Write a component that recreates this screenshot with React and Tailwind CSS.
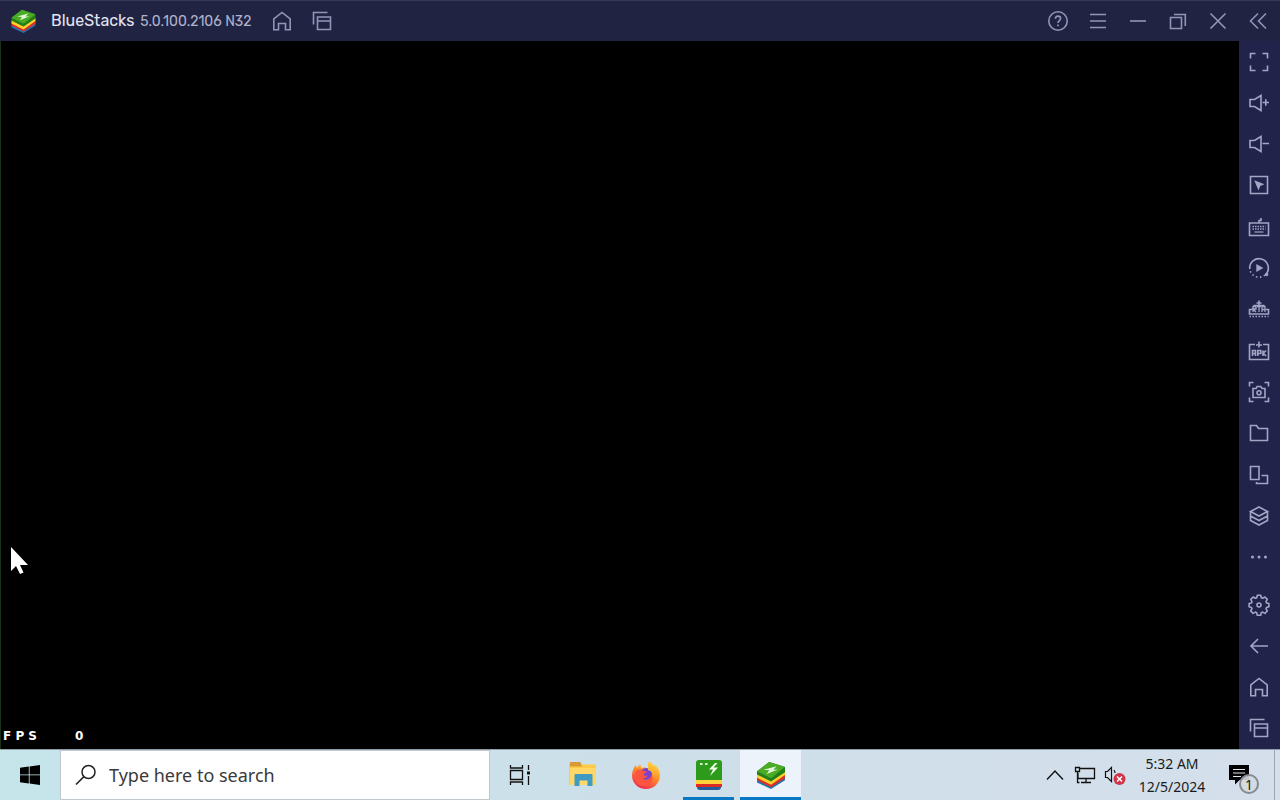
import React from "react";

function Icon({ children, size = 24, className = "" }) {
  return (
    <svg
      width={size}
      height={size}
      viewBox="0 0 24 24"
      fill="none"
      stroke="currentColor"
      strokeWidth="1.6"
      className={`shrink-0 ${className}`}
      aria-hidden="true"
    >
      {children}
    </svg>
  );
}

const HomeIcon = () => (
  <Icon>
    <path d="M3.8 20.800V9.800L12 3.400l8.200 6.400v11h-4.700V14.500h-7v6.300z" />
  </Icon>
);
const WindowsIcon = () => (
  <Icon>
    <path d="M3.500 15.500v-12h14M7.500 8h13v12.500h-13zM7.500 12h13" />
  </Icon>
);
const HelpIcon = () => (
  <Icon>
    <circle cx="12" cy="12" r="9.2" />
    <path d="M9.400 9.800c0-1.700 1.100-2.700 2.600-2.700s2.600 1 2.600 2.400c0 2-2.600 2.100-2.600 4.400M12 15.600v1.600" />
  </Icon>
);
const MenuIcon = () => (
  <Icon>
    <path d="M4 5.500h16M4 12h16M4 18.500h16" />
  </Icon>
);
const MinimizeIcon = () => (
  <Icon>
    <path d="M4 12h16" />
  </Icon>
);
const RestoreIcon = () => (
  <Icon>
    <path d="M4.500 8.500h11v11h-11zM8 5.500h11.300V17" />
  </Icon>
);
const CloseIcon = () => (
  <Icon>
    <path d="M4.500 4.500l15 15M19.500 4.500l-15 15" />
  </Icon>
);
const CollapseIcon = () => (
  <Icon>
    <path d="M12 4.500L4.500 12l7.500 7.500M20 4.500L12.500 12l7.500 7.500" />
  </Icon>
);
const FullscreenIcon = () => (
  <Icon>
    <path d="M3.500 8.500v-5h5M15.500 3.500h5v5M20.500 15.500v5h-5M8.500 20.500h-5v-5" />
  </Icon>
);
const VolumeUpIcon = () => (
  <Icon>
    <path d="M3 8.500h4.500l6.500-4v15l-6.500-4H3zM15.500 11.500H22M18.800 8.300v6.400" />
  </Icon>
);
const VolumeDownIcon = () => (
  <Icon>
    <path d="M3 8.500h4.500l6.500-4v15l-6.500-4H3zM15.500 11.500H22" />
  </Icon>
);
const CursorLockIcon = () => (
  <Icon>
    <path d="M3.500 3.500h17v17h-17z" />
    <path d="M7.200 7.200l10.300 4-4.200 1.700-1.800 4.600z" fill="currentColor" stroke="none" />
  </Icon>
);
const KeyboardIcon = () => (
  <Icon>
    <path d="M2.500 8h19v12.500h-19zM12 8V5.500h2V3" />
    <path d="M5.500 11.500h13M5.500 14h13" strokeDasharray="1.500 1" />
    <path d="M7.500 17h9" strokeWidth="1.200" />
  </Icon>
);
const SyncIcon = () => (
  <Icon>
    <path d="M2.800 13A9.300 9.300 0 1 1 19.500 17.500" />
    <path d="M3.300 15.200A9.300 9.300 0 0 0 18 19" strokeDasharray="1.500 2.500" />
    <path d="M9.300 8l7 4-7 4z" fill="currentColor" stroke="none" />
    <circle cx="19.600" cy="18.500" r="1.800" fill="currentColor" stroke="none" />
  </Icon>
);
const RealTimeIcon = () => (
  <Icon>
    <path d="M5.500 12.500h-3v4.500h19v-4.500h-3M12 8V3.500M9.500 6h5M6.500 8.500h11" />
    <path d="M6 15V9.500h3v2.500H6l3 3M10 9.500h4M12 9.500V15M15 15V9.500h3V15M15 12.500h3" strokeWidth="1.300" />
    <path d="M2.500 19.500h19" strokeDasharray="1.500 1.500" />
  </Icon>
);
const ApkIcon = () => (
  <Icon>
    <path d="M8 5.500H2.500v15h19v-15H16M12 2.500v6M9 6h6" />
    <path d="M5.500 17v-5.500h3V17M5.500 14.500h3M10.800 17v-5.500h3v3h-3M16 11.500V17M19 11.500l-2.800 2.700L19 17" />
  </Icon>
);
const ScreenshotIcon = () => (
  <Icon>
    <path d="M2.500 6.500v-4h4M17.500 2.500h4v4M21.500 17.500v4h-4M6.500 21.500h-4v-4" />
    <path d="M6 8.500h3l1.200-2h3.600l1.200 2h3v9H6z" />
    <circle cx="12" cy="12.700" r="2" />
  </Icon>
);
const FolderIcon = () => (
  <Icon>
    <path d="M3.500 19.500v-15h6l2 3h9v12z" />
  </Icon>
);
const RotateIcon = () => (
  <Icon>
    <path d="M3.500 3.500h8.500v13H3.500z" />
    <path d="M14.500 12.500h6v8h-11V19" />
  </Icon>
);
const LayersIcon = () => (
  <Icon>
    <path d="M12 3l8.500 4.500L12 12 3.500 7.500zM3.500 7.500v9L12 21l8.500-4.500v-9M3.500 12l8.500 4.500 8.500-4.500" />
  </Icon>
);
const MoreIcon = () => (
  <Icon>
    <g fill="currentColor" stroke="none">
      <circle cx="5.500" cy="12" r="1.500" />
      <circle cx="12" cy="12" r="1.500" />
      <circle cx="18.500" cy="12" r="1.500" />
    </g>
  </Icon>
);
const GearIcon = () => (
  <Icon>
    <path
      strokeLinejoin="round"
      d="M10.300 2.200h3.400l.6 2.500 1.300.6 2.300-1.300 2.400 2.400-1.300 2.300.5 1.200 2.400.7v3.200l-2.400.7-.5 1.200 1.300 2.300-2.400 2.400-2.300-1.300-1.300.6-.6 2.500h-3.400l-.6-2.500-1.300-.6-2.300 1.300-2.400-2.400L5 15.700l-.5-1.200-2.400-.7v-3.200l2.400-.7L5 8.700 3.700 6.400l2.400-2.400 2.300 1.300 1.300-.6z"
    />
    <circle cx="12" cy="12" r="2" />
  </Icon>
);
const BackIcon = () => (
  <Icon>
    <path d="M21 12H4M11 5l-7 7 7 7" />
  </Icon>
);

function StackLogo({ className }) {
  return (
    <svg viewBox="0 0 32 30" className={className} aria-hidden="true">
      <path d="M1 20l15 6 15-9v3.500L16 30 1 23z" fill="#2472b2" />
      <path d="M1 17l15 7.500L31 14v4.500L16 28 1 20.500z" fill="#dc2f25" />
      <path d="M1 14l15 7.500L31 11v4L16 25.500 1 18z" fill="#ffd02c" />
      <path d="M1 11L14 1l17 5.500V12L16 22 1 14.500z" fill="#238017" />
      <path d="M1 11L14 1l17 5.500L16 18.500z" fill="#4aab25" />
      <path d="M8 9.500l14-4-3.500 4 5-.5-12 5 2.500-4z" fill="#e2f6d8" />
    </svg>
  );
}

function FolderLogo() {
  return (
    <svg viewBox="0 0 28 26" className="h-[26px] w-7" aria-hidden="true">
      <path d="M0 1.500h11l2 1h13q1 0 1 1V23H1q-1 0-1-1z" fill="#ffca46" />
      <path d="M1 0h10.500L13 4.500H1z" fill="#d99a35" />
      <path d="M1 6h26v17H1z" fill="#ffd766" />
      <path d="M5.500 24V13q0-1 1-1h16q1 0 1 1v11h-5v-5.500h-8V24z" fill="#409bc3" />
    </svg>
  );
}

function FirefoxLogo() {
  return (
    <svg viewBox="0 0 30 30" className="h-[30px] w-[30px]" aria-hidden="true">
      <defs>
        <linearGradient id="fox" x1="0.8" y1="0" x2="0.3" y2="1">
          <stop offset="0" stopColor="#ffe345" />
          <stop offset="0.45" stopColor="#ff9427" />
          <stop offset="1" stopColor="#ef2653" />
        </linearGradient>
      </defs>
      <path
        d="M18 1c3 2 4 4 4.500 5.500 1-.5 1-1.500 1-2 4 3 5.500 7 5.500 11C29 23 23 29 15 29S1 23 1 15.500C1 11 3 7 5 5l.8 3C7 6.500 8 5 9.500 4.500L10 8c3-1 6 0 8 1-2-3-1-6 0-8z"
        fill="url(#fox)"
      />
      <circle cx="15" cy="14" r="6" fill="#7941cf" />
      <path
        d="M6 10c3-1 5-.5 7 1l3 .5c-1 1.800-3 1.500-3.500 3 .5 1.500 2.500 1.500 4 .8-.7 3-3 3.500-5.500 3 3 3 9 1.500 10-4 2 7-2 12-8 12-6 0-9.500-4.500-9.500-10 0-2.500.7-4.500 2.500-6.300z"
        fill="#fb553f"
      />
      <path d="M17 8c5 0 7.500 4 6 9-1-4-2.500-6-6-7z" fill="#ffb42c" />
    </svg>
  );
}

function ManagerLogo() {
  return (
    <svg viewBox="0 0 26 30" className="h-[30px] w-[26px]" aria-hidden="true">
      <path d="M1 24h24v3q0 3-3 3H4q-3 0-3-3z" fill="#245c9b" />
      <path d="M0 22h26v5H0z" fill="#db2b25" />
      <path d="M0 19h26v5H0z" fill="#ffd13a" />
      <path d="M0 3q0-3 3-3h20q3 0 3 3v17H0z" fill="#2c9b1b" />
      <path d="M19 3l-6 6.500h4L14 16l8-8.500h-4.500L21.500 3z" fill="#f2ffed" />
      <path d="M4 3h2.500v2H4zM9 3h2.500v2H9z" fill="#d8f5cf" />
    </svg>
  );
}

const windowControls = [
  ["Help", HelpIcon],
  ["Menu", MenuIcon],
  ["Minimize", MinimizeIcon],
  ["Restore", RestoreIcon],
  ["Close", CloseIcon],
  ["Collapse sidebar", CollapseIcon],
];

const tools = [
  ["Full screen", FullscreenIcon],
  ["Volume up", VolumeUpIcon],
  ["Volume down", VolumeDownIcon],
  ["Lock cursor", CursorLockIcon],
  ["Game controls", KeyboardIcon],
  ["Sync operations", SyncIcon],
  ["Real-time translation", RealTimeIcon],
  ["Install APK", ApkIcon],
  ["Screenshot", ScreenshotIcon],
  ["Media folder", FolderIcon],
  ["Rotate", RotateIcon],
  ["Instance manager", LayersIcon],
  ["More", MoreIcon],
];

const navigation = [
  ["Settings", GearIcon],
  ["Back", BackIcon],
  ["Home", HomeIcon],
  ["Recent apps", WindowsIcon],
];

function ToolButton({ label, Glyph }) {
  return (
    <button
      type="button"
      aria-label={label}
      className="flex h-[41px] w-10 items-center justify-center hover:bg-white/10"
    >
      <Glyph />
    </button>
  );
}

function TitleBar() {
  return (
    <header className="flex h-[41px] shrink-0 items-center border-t border-[#34385b] bg-[#202442] text-[#9295b8]">
      <StackLogo className="ml-[10px] h-6 w-[27px]" />
      <h1 className="ml-[14px] font-['Rubik','Inter',sans-serif] text-base text-[#e4e5f3]">BlueStacks</h1>
      <span className="ml-[6px] font-['Rubik','Inter',sans-serif] text-[14px] text-[#b0b2cc]">5.0.100.2106 N32</span>
      <div className="ml-[10px] flex">
        <ToolButton label="Home" Glyph={HomeIcon} />
        <ToolButton label="Recent apps" Glyph={WindowsIcon} />
      </div>
      <div className="ml-auto flex pr-[2px]">
        {windowControls.map(([label, Glyph]) => (
          <ToolButton key={label} label={label} Glyph={Glyph} />
        ))}
      </div>
    </header>
  );
}

function SideBar() {
  return (
    <aside className="flex w-[41px] shrink-0 flex-col bg-[#21234a] pb-px text-[#a3a5c5]">
      <div className="flex flex-1 flex-col justify-between">
        {tools.map(([label, Glyph]) => (
          <ToolButton key={label} label={label} Glyph={Glyph} />
        ))}
      </div>
      <nav className="mt-[6px] flex flex-col">
        {navigation.map(([label, Glyph]) => (
          <ToolButton key={label} label={label} Glyph={Glyph} />
        ))}
      </nav>
    </aside>
  );
}

function TaskBar() {
  return (
    <footer className="flex h-[51px] shrink-0 border-t border-[#8f9da8] bg-linear-to-r from-[#c5e5ea] via-[#cddfe9] to-[#d5dfec] font-['Noto_Sans',sans-serif] text-[#181c20]">
      <button type="button" aria-label="Start" className="flex w-[60px] items-center justify-center">
        <svg viewBox="0 0 20 20" className="h-5 w-5" fill="#000" aria-hidden="true">
          <path d="M0 2.800l8.800-1.300v8H0zM9.600 1.400L20 0v9.500H9.600zM0 10.300h8.800v8.200L0 17.300zM9.600 10.300H20V20L9.600 18.600z" />
        </svg>
      </button>
      <label className="flex w-[430px] items-center border border-[#c0c8cd] bg-white pl-[14px]">
        <svg viewBox="0 0 22 22" className="h-[22px] w-[22px] shrink-0" fill="none" stroke="#222" strokeWidth="1.500" aria-hidden="true">
          <circle cx="13.500" cy="8" r="6.500" />
          <path d="M8.900 12.600L1 20.500" />
        </svg>
        <input
          type="text"
          aria-label="Search"
          placeholder="Type here to search"
          className="ml-3 min-w-0 flex-1 bg-transparent text-[18px] outline-none placeholder:text-[#3a3a3a]"
        />
      </label>
      <div className="flex">
        <button type="button" aria-label="Task view" className="flex w-[60px] items-center justify-center">
          <svg viewBox="0 0 22 20" className="h-5 w-[22px]" fill="none" stroke="#111" strokeWidth="1.300" aria-hidden="true">
            <path d="M1.500 5.500h12v9h-12zM1.500 0v3h12V0M1.500 20v-3h12v3M19.500 0v5M19.500 11v9" />
            <path d="M18 6.500h3v3h-3z" fill="#111" stroke="none" />
          </svg>
        </button>
        <button type="button" aria-label="File Explorer" className="flex w-[65px] items-center justify-center">
          <FolderLogo />
        </button>
        <button type="button" aria-label="Firefox" className="flex w-[62px] items-center justify-center">
          <FirefoxLogo />
        </button>
        <button type="button" aria-label="Multi-instance manager" className="mx-[6px] flex w-[51px] items-center justify-center border-b-[3px] border-[#0878c4] pt-[3px]">
          <ManagerLogo />
        </button>
        <button type="button" aria-label="BlueStacks" className="flex w-[61px] items-center justify-center border-b-[3px] border-[#0878c4] bg-[#edf3fa] pt-[3px]">
          <StackLogo className="h-7 w-8" />
        </button>
      </div>
      <div className="ml-auto flex items-center">
        <button type="button" aria-label="Show hidden icons" className="flex w-[30px] justify-center">
          <svg viewBox="0 0 18 12" className="h-3 w-[18px]" fill="none" stroke="#111" strokeWidth="1.400" aria-hidden="true">
            <path d="M1 10.500L9 2l8 8.500" />
          </svg>
        </button>
        <button type="button" aria-label="Network" className="flex w-[30px] justify-center">
          <svg viewBox="0 0 22 18" className="h-[18px] w-[22px]" fill="none" stroke="#111" strokeWidth="1.300" aria-hidden="true">
            <path d="M6 2.500h14.500v10H4V7M1.500 1.500h4v4h-4zM3.500 5.500v11h2M12 12.500v4M7 16.500h10" />
          </svg>
        </button>
        <button type="button" aria-label="Sound muted" className="flex w-[30px] justify-center">
          <svg viewBox="0 0 22 20" className="h-5 w-[22px]" fill="none" stroke="#111" strokeWidth="1.200" aria-hidden="true">
            <path d="M1.500 6.500h2l4-4v14l-4-4h-2zM10 5q1 1.500 1 3" />
            <circle cx="15.500" cy="14" r="6" fill="#d13446" stroke="none" />
            <path d="M13 11.500l5 5M18 11.500l-5 5" stroke="#fff" strokeWidth="1.600" />
          </svg>
        </button>
        <time dateTime="2024-12-05T05:32" className="flex w-[84px] flex-col items-center text-[14px] leading-[23px]">
          <span>5:32 AM</span>
          <span>12/5/2024</span>
        </time>
        <button type="button" aria-label="Notifications, 1 new" className="relative ml-[15px] flex h-[50px] w-[45px] items-center">
          <svg viewBox="0 0 20 20" className="h-5 w-5" aria-hidden="true">
            <path d="M0 0h20v15h-9.500L6 19.500V15H0z" fill="#000" />
            <path d="M4 4.500h12M4 8h12M4 11.500h8" stroke="#dce4ed" strokeWidth="1.200" />
          </svg>
          <span className="absolute top-6 left-[10px] flex h-5 w-5 items-center justify-center rounded-full border-2 border-[#858990] bg-[#d5dae0]/90 text-[14px]">
            1
          </span>
        </button>
        <button type="button" aria-label="Show desktop" className="h-[50px] w-[6px] border-l border-[#9ba8b5]" />
      </div>
    </footer>
  );
}

export default function App() {
  return (
    <div className="flex h-screen flex-col overflow-hidden bg-black">
      <TitleBar />
      <div className="flex min-h-0 flex-1">
        <main className="relative flex flex-1 flex-col justify-end border-l border-[#183018] bg-black">
          <p className="mb-1 ml-[2px] flex gap-[38px] font-['DejaVu_Sans',sans-serif] text-[12px] leading-[18px] font-bold text-white">
            <span>F P S</span>
            <span>0</span>
          </p>
          <svg viewBox="0 0 18 28" className="absolute bottom-[174px] left-[9px] h-7 w-[18px]" aria-hidden="true">
            <path d="M1 0v24l5-5 4 8 3.500-1.500-3.500-7.500h8z" fill="#fff" />
          </svg>
        </main>
        <SideBar />
      </div>
      <TaskBar />
    </div>
  );
}
